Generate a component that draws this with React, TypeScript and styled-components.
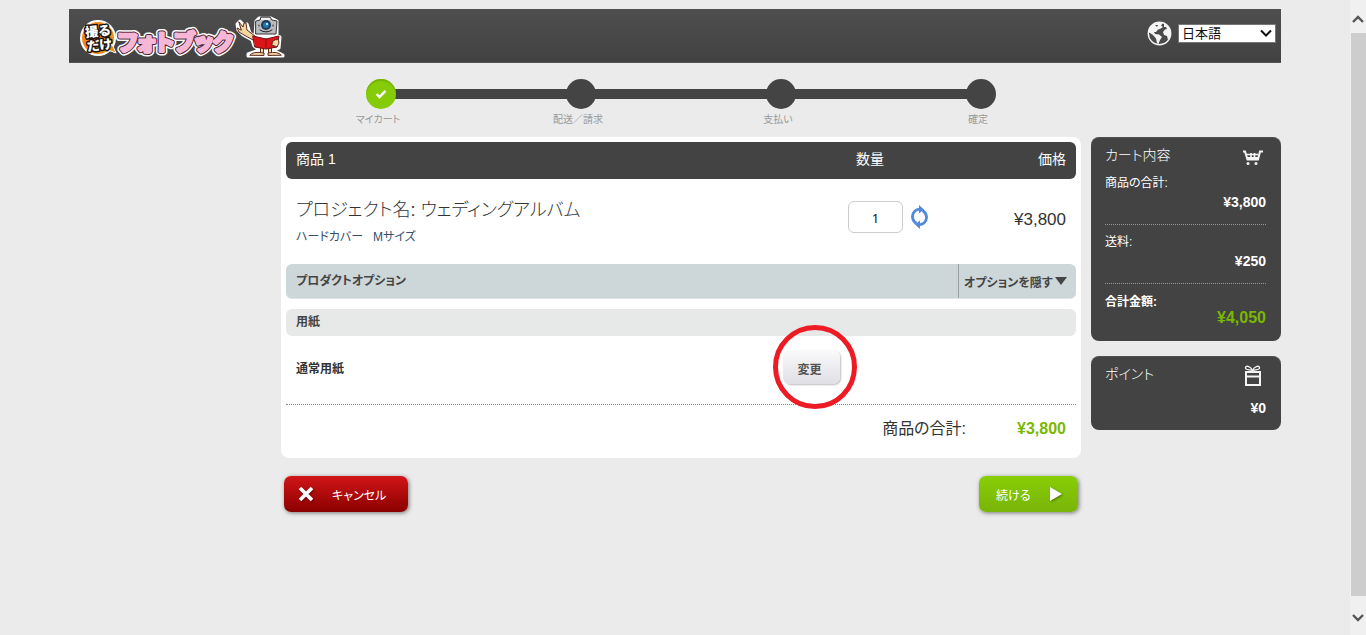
import React from "react";
import styled, { createGlobalStyle } from "styled-components";

const GlobalStyle = createGlobalStyle`
  *, *::before, *::after { box-sizing: border-box; }
  body {
    margin: 0;
    background: #ebebeb;
    color: #333;
    font-family: "Liberation Sans", "Noto Sans CJK JP", sans-serif;
    font-size: 12px;
    font-feature-settings: "palt";
  }
  button, input, select { font: inherit; font-feature-settings: inherit; }
  h1, h2, h3, p, ol, dl, dd { margin: 0; padding: 0; }
`;

const Shell = styled.div`
  display: grid;
  grid-template-columns: minmax(0, 1fr) 16px;
  min-height: 100vh;
`;

const Page = styled.div`
  width: 100%;
  max-width: 1212px;
  margin: 0 auto;
  padding-top: 9px;
`;

const Header = styled.header`
  display: flex;
  align-items: center;
  justify-content: space-between;
  height: 54px;
  padding: 0 5px 0 10px;
  background: linear-gradient(#4e4e4e, #424242);
  border-bottom: 1px solid #555;
`;

const LogoLink = styled.a`
  display: block;
  height: 48px;
  svg { display: block; }
`;

const Language = styled.label`
  display: flex;
  align-items: center;
  gap: 6px;
  padding-bottom: 4px;
`;

const SelectWrap = styled.span`
  position: relative;
  display: block;
  svg {
    position: absolute;
    right: 4px;
    top: 5px;
    pointer-events: none;
  }
`;

const Select = styled.select`
  appearance: none;
  display: block;
  width: 98px;
  height: 19px;
  padding: 0 3px;
  border: 1px solid #777;
  border-radius: 0;
  background: #fff;
  color: #111;
  font-size: 13px;
  line-height: 16px;
`;

const Body = styled.div`
  display: flex;
  justify-content: flex-end;
  gap: 10px;
`;

const Main = styled.main`
  flex: 0 1 800px;
  min-width: 0;
`;

const Steps = styled.ol`
  display: grid;
  grid-template-columns: repeat(4, 1fr);
  height: 74px;
  padding-top: 16px;
  list-style: none;
`;

const StepItem = styled.li`
  color: #999;
  font-size: 10px;
  line-height: 22px;
  text-align: center;
`;

const StepLabel = styled.span`
  display: block;
  padding-right: 6px;
`;

const StepTrack = styled.div`
  display: flex;
  align-items: center;
`;

const StepLine = styled.span<{ $hidden?: boolean }>`
  flex: 1;
  height: 10px;
  background: ${(p) => (p.$hidden ? "transparent" : "#444")};
`;

const StepDot = styled.span<{ $done?: boolean }>`
  z-index: 1;
  display: flex;
  align-items: center;
  justify-content: center;
  width: 30px;
  height: 30px;
  margin: 0 -2px;
  border-radius: 50%;
  background: ${(p) => (p.$done ? "#86cb08" : "#444")};
  box-shadow: ${(p) => (p.$done ? "inset 0 2px 1px #75b400" : "none")};
`;

const Card = styled.section`
  padding: 5px;
  border-radius: 8px;
  background: #fff;
`;

const itemColumns = "minmax(0, 1fr) 118px 100px";

const ItemHead = styled.div`
  display: grid;
  grid-template-columns: ${itemColumns};
  height: 37px;
  padding: 0 10px;
  border-radius: 6px;
  background: #434343;
  color: #fff;
  font-size: 14px;
  line-height: 35px;
  span:nth-child(2) { padding-left: 8px; }
  span:nth-child(3) { text-align: right; }
`;

const ItemRow = styled.div`
  display: grid;
  grid-template-columns: ${itemColumns};
  height: 85px;
  padding: 0 10px;
`;

const ItemName = styled.div`
  padding-top: 19px;
`;

const ProjectTitle = styled.h2`
  font-size: 18px;
  font-weight: 300;
  line-height: 24px;
`;

const ProductLink = styled.a`
  display: block;
  margin-top: 5px;
  color: #34506c;
  font-size: 12px;
  line-height: 20px;
  text-decoration: none;
  white-space: pre;
`;

const Quantity = styled.div`
  display: flex;
  align-items: flex-start;
  gap: 8px;
  padding-top: 22px;
`;

const QuantityInput = styled.input`
  width: 55px;
  height: 32px;
  padding: 2px 0 0;
  border: 1px solid #ccc;
  border-radius: 6px;
  background: #fff;
  color: #111;
  font-family: "Noto Sans", sans-serif;
  font-size: 13px;
  text-align: center;
`;

const IconButton = styled.button`
  display: block;
  margin-top: 4px;
  padding: 0;
  border: 0;
  background: none;
  cursor: pointer;
  svg { display: block; }
`;

const ItemPrice = styled.p`
  padding-top: 31px;
  font-size: 17px;
  line-height: 20px;
  text-align: right;
`;

const OptionsBar = styled.div`
  display: flex;
  justify-content: space-between;
  height: 35px;
  padding-left: 10px;
  border-radius: 6px;
  border-bottom: 1px solid #dde3e4;
  background: #cdd6d9;
  color: #444;
  h3 { font-size: 12px; line-height: 34px; }
`;

const ToggleButton = styled.button`
  display: flex;
  align-items: center;
  justify-content: space-between;
  width: 118px;
  height: 34px;
  padding: 0 9px 0 5px;
  border: 0;
  border-left: 1px solid #9aa0a2;
  background: none;
  color: #444;
  font-weight: 700;
  white-space: nowrap;
  cursor: pointer;
`;

const GroupBar = styled.h3`
  height: 27px;
  margin-top: 10px;
  padding-left: 10px;
  border-radius: 6px;
  background: #e7e9e8;
  color: #444;
  font-size: 12px;
  line-height: 26px;
`;

const OptionRow = styled.div`
  display: flex;
  align-items: center;
  height: 69px;
  padding-left: 10px;
  padding-bottom: 6px;
  border-bottom: 1px dotted #888;
  strong { flex: 0 1 487px; padding-top: 3px; font-size: 12px; line-height: 20px; }
`;

const Highlight = styled.div`
  position: relative;
  &::after {
    content: "";
    position: absolute;
    top: 50%;
    left: 50%;
    width: 84px;
    height: 84px;
    margin: -42px 0 0 -39px;
    border: 5px solid #ed1c24;
    border-radius: 50%;
    pointer-events: none;
  }
`;

const ChangeButton = styled.button`
  display: block;
  width: 57px;
  height: 34px;
  padding: 2px 4px 0 0;
  border: 0;
  border-radius: 7px;
  background: linear-gradient(#fafafa, #dfdfe6);
  box-shadow: 1px 1px 2px #bbb;
  color: #555;
  font-size: 12px;
  font-weight: 700;
  cursor: pointer;
`;

const TotalRow = styled.p`
  display: flex;
  justify-content: flex-end;
  height: 48px;
  padding: 0 10px;
  font-size: 16px;
  line-height: 48px;
  strong { width: 100px; color: #7ab800; text-align: right; }
`;

const Actions = styled.div`
  display: flex;
  justify-content: space-between;
  padding: 18px 3px;
`;

const ActionButton = styled.button<{ $kind: "cancel" | "next" }>`
  display: flex;
  align-items: center;
  gap: ${(p) => (p.$kind === "cancel" ? "18px" : "20px")};
  width: ${(p) => (p.$kind === "cancel" ? "124px" : "99px")};
  height: 36px;
  padding: 0 0 0 ${(p) => (p.$kind === "cancel" ? "14px" : "17px")};
  border: 0;
  border-radius: 7px;
  background: ${(p) =>
    p.$kind === "cancel"
      ? "linear-gradient(#d21518, #8a0000)"
      : "linear-gradient(#88ce06, #79b408)"};
  box-shadow: 1px 1px 4px #777;
  color: #fff;
  font-size: 12px;
  cursor: pointer;
  svg { filter: drop-shadow(1px 1px 1px rgba(0, 0, 0, 0.4)); }
`;

const Sidebar = styled.aside`
  display: flex;
  flex: 0 0 190px;
  flex-direction: column;
  gap: 15px;
  padding-top: 74px;
`;

const Panel = styled.section`
  padding: 0 15px 0 14px;
  border: 1px solid #505050;
  border-width: 1px 0 0;
  border-radius: 8px;
  background: #434343;
  color: #fff;
`;

const PanelTitle = styled.div`
  display: flex;
  justify-content: space-between;
  height: 35px;
  padding-right: 3px;
  h2 { font-size: 14px; font-weight: 300; line-height: 34px; }
  svg { margin-top: 8px; }
`;

const Entry = styled.dl`
  padding-bottom: 13px;
  dt { font-size: 12px; line-height: 20px; }
  dd { font-size: 14px; font-weight: 700; line-height: 18px; text-align: right; }
  & + & { padding-top: 7px; border-top: 1px dotted #999; }
`;

const TotalEntry = styled.dl`
  padding: 10px 0 15px;
  border-top: 1px dotted #999;
  font-weight: 700;
  line-height: 16px;
  dt { font-size: 12px; }
  dd { color: #7ab800; font-size: 16px; text-align: right; }
`;

const Points = styled.p`
  padding: 7px 0 13px;
  font-size: 14px;
  font-weight: 700;
  line-height: 18px;
  text-align: right;
`;

const ScrollRail = styled.div`
  display: flex;
  flex-direction: column;
  align-items: center;
  background: #f0f0f0;
  svg { flex: none; margin: 15px 0 9px; }
  svg:last-child { margin: 17px 0 13px; }
`;

const ScrollThumb = styled.div`
  flex: 1;
  width: 15px;
  background: #cdcdcd;
`;

const Logo = () => (
  <svg width="208" height="48" viewBox="0 0 208 48" role="img" aria-label="撮るだけフォトブック">
    <circle cx="19" cy="26" r="18" fill="#fff" />
    <circle cx="19" cy="26" r="16" fill="#f08a1d" />
    <path d="M29 38 L37 41 L33 32Z" fill="#f08a1d" stroke="#fff" strokeWidth="1" />
    <g
      fontFamily="'Noto Sans CJK JP', sans-serif"
      fontWeight="900"
      fontSize="13"
      strokeLinejoin="round"
      paintOrder="stroke"
      fill="#fff"
      stroke="#1b1210"
      strokeWidth="3"
      transform="rotate(-6 19 26)"
    >
      <text x="7" y="24">撮る</text>
      <text x="7" y="38">だけ</text>
    </g>
    <g
      fontFamily="'Noto Sans CJK JP', sans-serif"
      fontWeight="700"
      fontSize="22"
      strokeLinejoin="round"
      paintOrder="stroke"
    >
      <text x="39" y="38" fill="#fff" stroke="#fff" strokeWidth="8">フォトブック</text>
      <text x="39" y="38" fill="#4a2434" stroke="#4a2434" strokeWidth="5">フォトブック</text>
      <text x="39" y="38" fill="#f6b7d6" stroke="#f6b7d6" strokeWidth="3">フォトブック</text>
    </g>
    <g strokeLinejoin="round" strokeLinecap="round">
      <path
        d="M177 9 L180 6 H192 L198 9 V24 L201 25 L200 36 L194 38 L204 43 V44 H169 V42 L180 38 L175 34 L173 28 L164 23 L159 18 L158 12 L161 9 L165 13 L168 12 L171 21 L176 24Z"
        fill="#fff" stroke="#fff" strokeWidth="3"
      />
      <path d="M160 10 L164 15 L165 11 L167 11 L168 18 L176 24 L174 28 L165 23 L160 20 L158 16 L162 18Z" fill="#f7d5a0" stroke="#5b2b20" />
      <path d="M183 36 V42 M191 36 V42" stroke="#5b2b20" strokeWidth="4" />
      <path d="M183 36 V42 M191 36 V42" stroke="#f7d5a0" strokeWidth="2" />
      <path d="M171 43 Q174 39 185 41 V43Z M189 43 V41 Q199 39 202 43Z" fill="#f7d5a0" stroke="#5b2b20" />
      <path d="M177 9 L181 8 L182 5 H191 L193 8 L198 9 L197 22 H177Z" fill="#b8bbc0" stroke="#3b3335" />
      <rect x="182" y="6" width="9" height="2" fill="#eef1f4" />
      <circle cx="187" cy="13" r="5" fill="#23384f" />
      <circle cx="187" cy="13" r="3" fill="#1b78b8" />
      <circle cx="188" cy="12" r="1" fill="#fff" />
      <path d="M180 13 V14 M194 13 V14 M181 18 Q187 22 193 18" stroke="#222" fill="none" />
      <path d="M174 24 L187 27 L200 24 L198 35 L187 37 L176 35Z" fill="#dd1418" stroke="#6c1013" />
      <path d="M187 27 V36" stroke="#8b1013" />
      <path d="M194 29 Q200 25 200 31 L198 35 L193 33Z" fill="#f7d5a0" stroke="#5b2b20" />
    </g>
  </svg>
);

const Globe = () => (
  <svg width="25" height="25" viewBox="0 0 25 25" aria-hidden="true">
    <circle cx="12.5" cy="12.5" r="11.2" fill="#4a4a4a" stroke="#f4f4f4" strokeWidth="1.400" />
    <path d="M3 6 L7 2.500 L12 1.500 L16 2 L14 4.500 L16 6 L13 8 L11 8.500 L9 11 L7 11 L8 13 L12 13.500 L15 16 L13 19 L11.500 23 L10 22 L9 17.500 L6 14 L3 12 L1 11Z" fill="#f4f4f4" />
    <path d="M17 2.500 L20 4 L23 8 L24 12 L23 16.500 L21 19 L20 15 L17 14 L16 11 L18 8.500 L20 8 L19 6 L17 6Z" fill="#f4f4f4" />
    <path d="M8 4 L11 4 L10 6Z" fill="#4a4a4a" />
  </svg>
);

const Chevron = ({ up }: { up?: boolean }) => (
  <svg width="12" height="9" viewBox="0 0 12 9" aria-hidden="true">
    <path d={up ? "M1 7 L6 2 L11 7" : "M1 2 L6 7 L11 2"} fill="none" stroke="#555" strokeWidth="2.4" />
  </svg>
);

const Refresh = () => (
  <svg width="17" height="24" viewBox="0 0 17 24" aria-hidden="true">
    <g fill="none" stroke="#5189dc" strokeWidth="2.800">
      <path d="M5.500 18.500 C1 16 0 9.500 4 6 C6 4.200 8 4.200 9.500 4.200" />
      <path d="M11.500 5.500 C16 8 17 14.500 13 18 C11 19.800 9 19.800 7.500 19.800" />
    </g>
    <path d="M8 0 L13 4.500 L8 8.500Z M9 15.500 L4 19.500 L9 24Z" fill="#5189dc" />
  </svg>
);

const Cart = () => (
  <svg width="20" height="20" viewBox="0 0 20 20" aria-hidden="true">
    <path d="M0 5.500 H2 L4.500 13.500 H15 L17 5.500 H20" fill="none" stroke="#f4f4f4" strokeWidth="2" />
    <path d="M3 8.500 H15 M8 7 V12 M11.500 7 V12" fill="none" stroke="#f4f4f4" strokeWidth="1.600" />
    <path d="M3.500 11 H15 V13 H4Z" fill="#f4f4f4" />
    <circle cx="5" cy="17.500" r="1.500" fill="#f4f4f4" />
    <circle cx="13" cy="17.500" r="1.500" fill="#f4f4f4" />
  </svg>
);

const Gift = () => (
  <svg width="20" height="21" viewBox="0 0 20 21" aria-hidden="true">
    <g fill="none" stroke="#f4f4f4">
      <path d="M9.500 5.500 C8 1.500 3 0 2.500 2.500 C2 5 6 4.500 9.500 5.500 C11 1.500 16 0 16.500 2.500 C17 5 13 4.500 9.500 5.500Z" strokeWidth="1.300" />
      <path d="M3 7 H17 V20 H3Z M3 11.500 H17" strokeWidth="2" />
    </g>
  </svg>
);

const steps = ["マイカート", "配送／請求", "支払い", "確定"];

export default function App() {
  return (
    <>
      <GlobalStyle />
      <Shell>
        <Page>
          <Header>
            <LogoLink href="#"><Logo /></LogoLink>
            <Language>
              <Globe />
              <SelectWrap>
                <Select defaultValue="ja" aria-label="言語">
                  <option value="ja">日本語</option>
                </Select>
                <svg width="12" height="9" viewBox="0 0 12 9" aria-hidden="true">
                  <path d="M1 1.500 L6 6.500 L11 1.500" fill="none" stroke="#111" strokeWidth="2" />
                </svg>
              </SelectWrap>
            </Language>
          </Header>
          <Body>
            <Main>
              <Steps>
                {steps.map((label, i) => (
                  <StepItem key={label}>
                    <StepTrack>
                      <StepLine $hidden={i === 0} />
                      <StepDot $done={i === 0}>
                        {i === 0 && (
                          <svg width="12" height="10" viewBox="0 0 12 10" aria-hidden="true">
                            <path d="M1.500 5 L4.500 8 L10.500 1.800" fill="none" stroke="#fff" strokeWidth="2.400" />
                          </svg>
                        )}
                      </StepDot>
                      <StepLine $hidden={i === steps.length - 1} />
                    </StepTrack>
                    <StepLabel>{label}</StepLabel>
                  </StepItem>
                ))}
              </Steps>
              <Card>
                <ItemHead>
                  <span>商品 1</span>
                  <span>数量</span>
                  <span>価格</span>
                </ItemHead>
                <ItemRow>
                  <ItemName>
                    <ProjectTitle>プロジェクト名: ウェディングアルバム</ProjectTitle>
                    <ProductLink href="#">{"ハードカバー   Mサイズ"}</ProductLink>
                  </ItemName>
                  <Quantity>
                    <QuantityInput aria-label="数量" defaultValue="1" />
                    <IconButton type="button" aria-label="更新"><Refresh /></IconButton>
                  </Quantity>
                  <ItemPrice>¥3,800</ItemPrice>
                </ItemRow>
                <OptionsBar>
                  <h3>プロダクトオプション</h3>
                  <ToggleButton type="button">
                    オプションを隠す
                    <svg width="12" height="8" viewBox="0 0 12 8" aria-hidden="true">
                      <path d="M0 0 H12 L6 8Z" fill="#444" />
                    </svg>
                  </ToggleButton>
                </OptionsBar>
                <GroupBar>用紙</GroupBar>
                <OptionRow>
                  <strong>通常用紙</strong>
                  <Highlight>
                    <ChangeButton type="button">変更</ChangeButton>
                  </Highlight>
                </OptionRow>
                <TotalRow>
                  <span>商品の合計:</span>
                  <strong>¥3,800</strong>
                </TotalRow>
              </Card>
              <Actions>
                <ActionButton type="button" $kind="cancel">
                  <svg width="16" height="16" viewBox="0 0 16 16" aria-hidden="true">
                    <path d="M2 2 L14 14 M14 2 L2 14" stroke="#fff" strokeWidth="3.600" />
                  </svg>
                  キャンセル
                </ActionButton>
                <ActionButton type="button" $kind="next">
                  続ける
                  <svg width="12" height="14" viewBox="0 0 12 14" aria-hidden="true">
                    <path d="M0 0 L12 7 L0 14Z" fill="#fff" />
                  </svg>
                </ActionButton>
              </Actions>
            </Main>
            <Sidebar>
              <Panel>
                <PanelTitle><h2>カート内容</h2><Cart /></PanelTitle>
                <Entry><dt>商品の合計:</dt><dd>¥3,800</dd></Entry>
                <Entry><dt>送料:</dt><dd>¥250</dd></Entry>
                <TotalEntry><dt>合計金額:</dt><dd>¥4,050</dd></TotalEntry>
              </Panel>
              <Panel>
                <PanelTitle><h2>ポイント</h2><Gift /></PanelTitle>
                <Points>¥0</Points>
              </Panel>
            </Sidebar>
          </Body>
        </Page>
        <ScrollRail aria-hidden="true">
          <Chevron up />
          <ScrollThumb />
          <Chevron />
        </ScrollRail>
      </Shell>
    </>
  );
}
